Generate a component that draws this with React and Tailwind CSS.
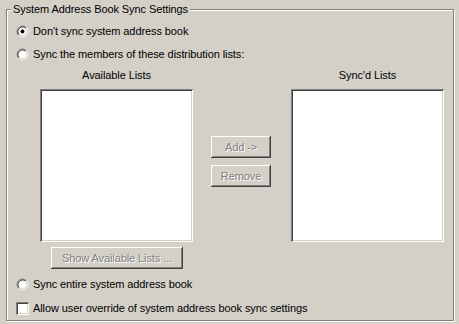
const FONT = "font-['Liberation_Sans',Arial,sans-serif] text-[11px] leading-[13px] tracking-[-0.09px]";

function Radio({ checked }) {
  return (
    <svg width="13" height="13" viewBox="0 0 13 13" className="shrink-0">
      <circle cx="6.5" cy="6.5" r="4.2" fill="#fff" />
      <path d="M2.61 10.39 A5.5 5.5 0 0 1 10.39 2.61" fill="none" stroke="#808080" />
      <path d="M10.39 2.61 A5.5 5.5 0 0 1 2.61 10.39" fill="none" stroke="#fff" />
      <path d="M3.32 9.68 A4.5 4.5 0 0 1 9.68 3.32" fill="none" stroke="#404040" />
      <path d="M9.68 3.32 A4.5 4.5 0 0 1 3.32 9.68" fill="none" stroke="#d4d0c8" />
      {checked && <circle cx="6.5" cy="6.5" r="2" fill="#000" />}
    </svg>
  );
}

function Checkbox() {
  return (
    <div className="w-[13px] h-[13px] shrink-0 bg-white shadow-[inset_1px_1px_#808080,inset_-1px_-1px_#fff,inset_2px_2px_#404040,inset_-2px_-2px_#d4d0c8]" />
  );
}

function Button({ children, className = "" }) {
  return (
    <div
      className={`h-[22px] flex items-center justify-center text-[#808080] [text-shadow:1px_1px_0_#fff] shadow-[inset_-1px_-1px_#404040,inset_1px_1px_#fff,inset_-2px_-2px_#808080] ${className}`}
    >
      {children}
    </div>
  );
}

function ListBox() {
  return (
    <div className="w-[153px] h-[153px] shrink-0 bg-white shadow-[inset_1px_1px_#808080,inset_-1px_-1px_#fff,inset_2px_2px_#404040,inset_-2px_-2px_#d4d0c8]" />
  );
}

export default function App() {
  return (
    <div className={`w-[459px] h-[324px] bg-[#d4d0c8] text-black overflow-hidden pt-[9px] pl-[6px] ${FONT}`}>
      {/* group box */}
      <div className="relative w-[448px] h-[312px] border border-[#808080] shadow-[inset_1px_1px_0_#fff,1px_1px_0_#fff]">
        <span className="absolute top-[-7px] left-[4px] px-[2px] bg-[#d4d0c8]">
          System Address Book Sync Settings
        </span>

        <div className="flex flex-col">
          <label className="flex items-center gap-[4px] ml-[9px] mt-[15px] h-[13px]">
            <Radio checked />
            <span>Don't sync system address book</span>
          </label>
          <label className="flex items-center gap-[4px] ml-[9px] mt-[10px] h-[13px]">
            <Radio />
            <span>Sync the members of these distribution lists:</span>
          </label>

          <div className="flex mt-[8px] ml-[33px] h-[13px]">
            <div className="w-[153px] text-center">Available Lists</div>
            <div className="w-[98px]" />
            <div className="w-[153px] text-center">Sync'd Lists</div>
          </div>

          <div className="flex mt-[7px] ml-[33px]">
            <ListBox />
            <div className="w-[98px] flex flex-col pl-[18px] pt-[47px] gap-[7px]">
              <Button className="w-[60px]">Add -&gt;</Button>
              <Button className="w-[60px]">Remove</Button>
            </div>
            <ListBox />
          </div>

          <div className="flex mt-[5px] ml-[44px]">
            <Button className="w-[132px]">Show Available Lists ...</Button>
          </div>

          <label className="flex items-center gap-[4px] ml-[9px] mt-[9px] h-[13px]">
            <Radio />
            <span>Sync entire system address book</span>
          </label>
          <label className="flex items-center gap-[4px] ml-[9px] mt-[11px] h-[13px]">
            <Checkbox />
            <span>Allow user override of system address book sync settings</span>
          </label>
        </div>
      </div>
    </div>
  );
}
